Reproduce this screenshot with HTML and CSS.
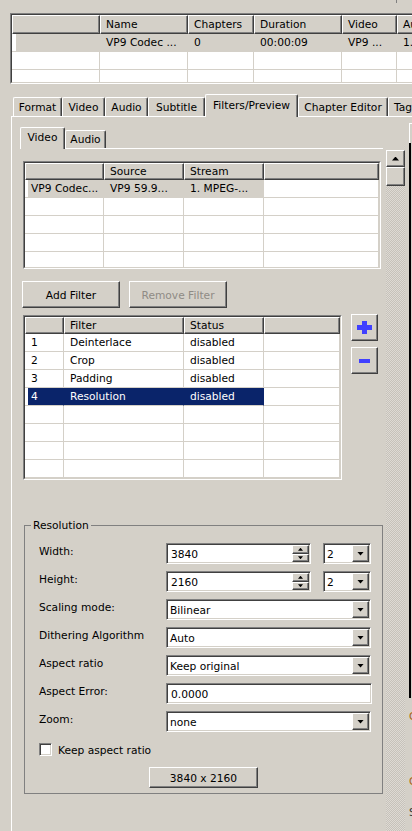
FILE: index.html
```html
<!DOCTYPE html>
<html>
<head>
<meta charset="utf-8">
<link rel="stylesheet" href="styles.css">
</head>
<body>
<div class="topstrip"><i></i></div>

<div class="tbl files">
  <div class="tbl-in">
    <div class="row hdr">
      <div class="th"></div><div class="th">Name</div><div class="th">Chapters</div><div class="th">Duration</div><div class="th">Video</div><div class="th">Audio</div>
    </div>
    <div class="row gray">
      <div class="td c1 c1w"></div><div class="td">VP9 Codec ...</div><div class="td">0</div><div class="td">00:00:09</div><div class="td">VP9 ...</div><div class="td">1. ...</div>
    </div>
    <div class="row">
      <div class="td"></div><div class="td"></div><div class="td"></div><div class="td"></div><div class="td"></div><div class="td"></div>
    </div>
    <div class="row">
      <div class="td"></div><div class="td"></div><div class="td"></div><div class="td"></div><div class="td"></div><div class="td"></div>
    </div>
  </div>
</div>

<div class="tabs">
  <div class="tab t1">Format</div>
  <div class="tab t2">Video</div>
  <div class="tab t3">Audio</div>
  <div class="tab t4">Subtitle</div>
  <div class="tab t5 on">Filters/Preview</div>
  <div class="tab t6">Chapter Editor</div>
  <div class="tab t7">Tags</div>
</div>

<div class="page">
  <div class="main">
    <div class="subtabs">
      <div class="stab st1 on">Video</div>
      <div class="stab st2">Audio</div>
    </div>
    <div class="subpanel">
      <div class="tbl stream">
        <div class="tbl-in">
          <div class="row hdr">
            <div class="th"></div><div class="th">Source</div><div class="th">Stream</div><div class="th"></div>
          </div>
          <div class="row gray">
            <div class="td c1">VP9 Codec...</div><div class="td">VP9 59.9...</div><div class="td">1. MPEG-...</div><div class="td w"></div>
          </div>
          <div class="row"><div class="td c1"></div><div class="td"></div><div class="td"></div><div class="td"></div></div>
          <div class="row"><div class="td c1"></div><div class="td"></div><div class="td"></div><div class="td"></div></div>
          <div class="row"><div class="td c1"></div><div class="td"></div><div class="td"></div><div class="td"></div></div>
          <div class="row"><div class="td c1"></div><div class="td"></div><div class="td"></div><div class="td"></div></div>
        </div>
      </div>

      <div class="btns">
        <div class="btn raised">Add Filter</div>
        <div class="btn raised dis">Remove Filter</div>
      </div>

      <div class="frow">
        <div class="tbl filt">
          <div class="tbl-in">
            <div class="row hdr">
              <div class="th"></div><div class="th">Filter</div><div class="th">Status</div><div class="th"></div>
            </div>
            <div class="row"><div class="td c1">1</div><div class="td">Deinterlace</div><div class="td">disabled</div><div class="td"></div></div>
            <div class="row"><div class="td c1">2</div><div class="td">Crop</div><div class="td">disabled</div><div class="td"></div></div>
            <div class="row"><div class="td c1">3</div><div class="td">Padding</div><div class="td">disabled</div><div class="td"></div></div>
            <div class="row sel"><div class="td c1">4</div><div class="td">Resolution</div><div class="td">disabled</div><div class="td w"></div></div>
            <div class="row"><div class="td c1"></div><div class="td"></div><div class="td"></div><div class="td"></div></div>
            <div class="row"><div class="td c1"></div><div class="td"></div><div class="td"></div><div class="td"></div></div>
            <div class="row"><div class="td c1"></div><div class="td"></div><div class="td"></div><div class="td"></div></div>
            <div class="row"><div class="td c1"></div><div class="td"></div><div class="td"></div><div class="td"></div></div>
          </div>
        </div>
        <div class="side">
          <div class="pm raised"><svg width="15" height="13" viewBox="0 0 15 13"><path d="M5 0h5v4h5v5h-5v4H5V9H0V4h5z" fill="#4040ff"/></svg></div>
          <div class="pm raised"><svg width="11" height="4" viewBox="0 0 11 4"><rect width="11" height="4" fill="#4040ff"/></svg></div>
        </div>
      </div>

      <fieldset class="group">
        <legend>Resolution</legend>
        <div class="form">
          <label>Width:</label>
          <div class="pair">
            <div class="field sunken spin"><span>3840</span><div class="sb"><b class="raised up"></b><b class="raised dn"></b></div></div>
            <div class="field sunken small"><span>2</span><i class="dd raised"></i></div>
          </div>
          <label>Height:</label>
          <div class="pair">
            <div class="field sunken spin"><span>2160</span><div class="sb"><b class="raised up"></b><b class="raised dn"></b></div></div>
            <div class="field sunken small"><span>2</span><i class="dd raised"></i></div>
          </div>
          <label>Scaling mode:</label>
          <div class="field sunken wide"><span>Bilinear</span><i class="dd raised"></i></div>
          <label>Dithering Algorithm</label>
          <div class="field sunken wide"><span>Auto</span><i class="dd raised"></i></div>
          <label>Aspect ratio</label>
          <div class="field sunken wide"><span>Keep original</span><i class="dd raised"></i></div>
          <label>Aspect Error:</label>
          <div class="field sunken text"><span>0.0000</span></div>
          <label>Zoom:</label>
          <div class="field sunken wide"><span>none</span><i class="dd raised"></i></div>
        </div>
        <div class="check"><span class="box sunken"></span><span>Keep aspect ratio</span></div>
        <div class="size raised">3840 x 2160</div>
      </fieldset>
    </div>
  </div>

  <div class="vscroll">
    <div class="sup raised"></div>
    <div class="thumb raised"></div>
    <div class="track"></div>
  </div>

  <div class="rstrip">
    <div class="rs-box"></div>
    <div class="rs-line"></div>
    <div class="rs-g g1">C</div>
    <div class="rs-g g2">C</div>
    <div class="rs-g g3">S</div>
  </div>
</div>
</body>
</html>
```

FILE: styles.css
```css
* { box-sizing: border-box; margin: 0; padding: 0; }
html, body { width: 412px; height: 831px; overflow: hidden; }
body {
  background: #d4d0c8;
  font-family: "DejaVu Sans", Verdana, sans-serif;
  font-size: 8pt;
  line-height: 13px;
  color: #000;
  white-space: nowrap;
}

/* generic 3D looks */
.raised {
  background: #d4d0c8;
  border: 1px solid;
  border-color: #fff #404040 #404040 #fff;
  box-shadow: inset -1px -1px #808080;
}
.sunken {
  background: #fff;
  border: 1px solid;
  border-color: #808080 #fff #fff #808080;
  box-shadow: inset 1px 1px #404040, inset -1px -1px #d4d0c8;
}

.topstrip { height: 13px; padding-left: 396px; }
.topstrip i { display: block; width: 1px; height: 3px; background: #808080; }

/* list views */
.tbl { border: 1px solid; border-color: #808080 #fff #fff #808080; }
.tbl-in {
  border: 1px solid;
  border-color: #404040 #d4d0c8 #d4d0c8 #404040;
  background: #fff;
  overflow: hidden;
}
.row { display: grid; height: 18px; }
.row.hdr { height: 17px; }
.th {
  background: #d4d0c8;
  border: 1px solid;
  border-color: #fff #404040 #404040 #fff;
  box-shadow: inset -1px -1px #808080;
  padding: 1px 0 0 5px;
  line-height: 14px;
  overflow: hidden;
}
.td {
  border-right: 1px solid #d4d0c8;
  border-bottom: 1px solid #d4d0c8;
  padding: 1px 0 0 6px;
  line-height: 16px;
  overflow: hidden;
}
.gray .td { background: #d4d0c8; }
.gray .td.c1, .sel .td.c1 { box-shadow: inset 3px 0 #fff; }
.gray .td.c1w { box-shadow: inset 4px 0 #fff; }
.sel .td { background: #0a246a; color: #fff; border-right-color: #0a246a; }
.row .td.w { background: #fff; border-right-color: #d4d0c8; }

.files { margin-left: 10px; width: 420px; }
.files .tbl-in { height: 69px; }
.files .row { grid-template-columns: 88px 88px 66px 88px 55px 80px; }
.files .row.hdr { height: 19px; }
.files .th { line-height: 16px; }

/* main tabs */
.tabs {
  display: flex;
  align-items: flex-end;
  height: 22px;
  margin-top: 10px;
  padding-left: 13px;
  position: relative;
  z-index: 1;
}
.tab, .stab {
  flex: none;
  height: 19px;
  background: #d4d0c8;
  border-top: 1px solid #fff;
  border-left: 1px solid #fff;
  border-right: 1px solid #404040;
  box-shadow: inset -1px 0 #808080;
  border-radius: 2px 2px 0 0;
  text-align: center;
  padding-top: 1px;
  line-height: 17px;
  overflow: hidden;
}
.tab.on { height: 23px; margin-bottom: -1px; line-height: 19px; }
.t1 { width: 49px; }
.t2 { width: 43px; }
.t3 { width: 43px; }
.t4 { width: 57px; }
.t5 { width: 93px; }
.t6 { width: 90px; }
.t7 { width: 40px; text-align: left; padding-left: 5px; }

.page {
  display: flex;
  margin-left: 11px;
  height: 715px;
  border-top: 1px solid #fff;
  border-left: 1px solid #fff;
}
.main { flex: none; width: 374px; padding: 10px 0 0 8px; }

/* sub tabs */
.subtabs {
  display: flex;
  align-items: flex-end;
  height: 21px;
  position: relative;
  z-index: 1;
}
.stab { height: 18px; line-height: 16px; }
.stab.on { height: 22px; margin-bottom: -1px; line-height: 18px; }
.st1 { width: 45px; }
.st2 { width: 41px; }
.subpanel { width: 363px; border-top: 1px solid #fff; padding: 12px 0 0 2px; }

.stream { width: 358px; margin-left: 1px; }
.stream .tbl-in { height: 106px; }
.stream .row { grid-template-columns: 79px 80px 80px 115px; }

.btns { display: flex; gap: 9px; margin-top: 12px; }
.btn {
  width: 98px;
  height: 27px;
  display: flex;
  align-items: center;
  justify-content: center;
  padding-top: 1px;
}
.btn.dis { color: #8f8b85; }

.frow { display: flex; margin-top: 7px; }
.filt { width: 319px; margin-left: 1px; }
.filt .tbl-in { height: 163px; }
.filt .row { grid-template-columns: 39px 120px 80px 76px; }
.side { display: flex; flex-direction: column; gap: 6px; margin: -1px 0 0 9px; }
.pm { width: 27px; height: 27px; display: flex; align-items: center; justify-content: center; }
.pm svg { display: block; }

/* group box */
.group {
  margin: 39px 0 0 2px;
  width: 359px;
  min-width: 0;
  border: 1px solid #808080;
  padding: 11px 10px 5px 14px;
}
.group legend { margin-left: -8px; padding: 0 2px; line-height: 13px; }
.form { display: grid; grid-template-columns: 127px 206px; row-gap: 7px; align-items: start; }
.form label { line-height: 18px; }
.pair { display: flex; gap: 12px; }
.field {
  height: 21px;
  display: flex;
  align-items: center;
  padding-left: 3px;
  overflow: hidden;
}
.field span { padding-top: 1px; }
.spin { width: 145px; padding-left: 4px; }
.small { width: 48px; }
.wide { width: 205px; }
.text { width: 206px; padding-left: 4px; }

.sb { margin-left: auto; margin-right: 1px; width: 17px; height: 17px; display: flex; flex-direction: column; flex: none; }
.sb b { flex: 1; display: flex; align-items: center; justify-content: center; }
.sb b::before { content: ""; width: 5px; height: 3px; background: #000; }
.sb .up::before { clip-path: polygon(50% 0, 100% 100%, 0 100%); }
.sb .dn::before { clip-path: polygon(0 0, 100% 0, 50% 100%); }

.dd {
  margin-left: auto;
  margin-right: 1px;
  width: 17px;
  height: 17px;
  flex: none;
  display: flex;
  align-items: center;
  justify-content: center;
}
.dd::before { content: ""; width: 7px; height: 4px; background: #000; clip-path: polygon(0 0, 100% 0, 50% 100%); }

.check { display: flex; align-items: center; gap: 6px; margin-top: 11px; height: 13px; }
.check span + span { padding-top: 1px; }
.box { width: 13px; height: 13px; flex: none; }

.size {
  width: 109px;
  height: 21px;
  margin: 11px 0 0 110px;
  display: flex;
  align-items: center;
  justify-content: center;
  padding-top: 1px;
}

/* scrollbar */
.vscroll { flex: none; width: 19px; margin-top: 33px; display: flex; flex-direction: column; }
.sup { height: 17px; display: flex; align-items: center; justify-content: center; }
.sup::before { content: ""; width: 7px; height: 4px; background: #000; clip-path: polygon(50% 0, 100% 100%, 0 100%); }
.thumb { height: 19px; }
.track { flex: 1; background: repeating-conic-gradient(#c6c2ba 0 25%, #dedad4 0 50%) 0 0 / 2px 2px; }

/* right strip */
.rstrip { flex: 1; min-width: 0; overflow: hidden; padding-left: 4px; }
.rs-box { margin-top: 6px; height: 20px; border-left: 1px solid #fff; border-top: 1px solid #fff; }
.rs-line { width: 2px; height: 555px; background: #000; }
.rs-g { line-height: 13px; color: #a8641c; }
.g1 { margin-top: 12px; }
.g2 { margin-top: 52px; }
.g3 { margin-top: 18px; color: #333; }
```
